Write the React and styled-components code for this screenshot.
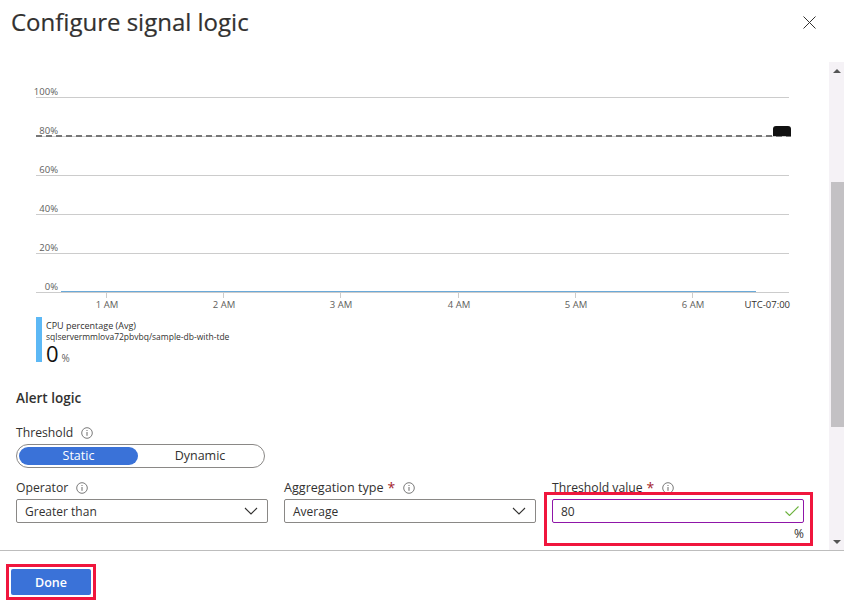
import styled, { createGlobalStyle } from 'styled-components';

const GlobalStyle = createGlobalStyle`
  html, body { margin: 0; padding: 0; background: #fff; }
  body { font-family: "Open Sans", "Noto Sans", sans-serif; color: #323130; }
`;

const ticks = [
  { label: '1 AM', x: 106 },
  { label: '2 AM', x: 223 },
  { label: '3 AM', x: 340 },
  { label: '4 AM', x: 458 },
  { label: '5 AM', x: 575 },
  { label: '6 AM', x: 692 },
];
const grid = [
  { label: '100%', y: 97 },
  { label: '60%', y: 175 },
  { label: '40%', y: 214 },
  { label: '20%', y: 253 },
];

function InfoIcon() {
  return (
    <Info viewBox="0 0 12 12" width="12" height="12">
      <circle cx="6" cy="6" r="5.3" fill="none" stroke="#6b6b6b" strokeWidth="0.9" />
      <rect x="5.5" y="5" width="1" height="3.8" fill="#6b6b6b" />
      <rect x="5.5" y="3" width="1" height="1" fill="#6b6b6b" />
    </Info>
  );
}

function Chevron() {
  return (
    <svg width="14" height="8" viewBox="0 0 14 8">
      <path d="M1 1l6 6 6-6" fill="none" stroke="#323130" strokeWidth="1.1" />
    </svg>
  );
}

function Chart() {
  return (
    <ChartSvg width="829" height="254" viewBox="0 62 829 254">
      {grid.map((g) => (
        <g key={g.y}>
          <line x1="36" x2="789" y1={g.y + 0.5} y2={g.y + 0.5} stroke="#ccc" />
          <AxisText x="58" y={g.y - 2} textAnchor="end">{g.label}</AxisText>
        </g>
      ))}
      <line x1="36" x2="789" y1="136.5" y2="136.5" stroke="#ccc" />
      <line x1="36" x2="791" y1="136" y2="136" stroke="#777" strokeWidth="2" strokeDasharray="6 4" />
      <AxisText x="58" y="134" textAnchor="end">80%</AxisText>
      <path d="M773 136v-7q0-3 3-3h12q3 0 3 3v7z" fill="#111" />

      <line x1="36" x2="789" y1="292.5" y2="292.5" stroke="#ccc" />
      <line x1="61" x2="756" y1="291.5" y2="291.5" stroke="#6aa9d8" />
      <AxisText x="58" y="290" textAnchor="end">0%</AxisText>
      {ticks.map((t) => (
        <g key={t.label}>
          <line x1={t.x + 0.5} x2={t.x + 0.5} y1="293" y2="298" stroke="#ccc" />
          <AxisText x={t.x + 1} y="308" textAnchor="middle">{t.label}</AxisText>
        </g>
      ))}
      <ZoneText x="790" y="308" textAnchor="end">UTC-07:00</ZoneText>
    </ChartSvg>
  );
}

export default function App() {
  return (
    <Page>
      <GlobalStyle />
      <Header>
        <Title>Configure signal logic</Title>
        <CloseButton aria-label="Close">
          <svg width="13" height="13" viewBox="0 0 13 13">
            <path d="M.5.5l12 12M12.5.5l-12 12" stroke="#323130" strokeWidth="1" fill="none" />
          </svg>
        </CloseButton>
      </Header>

      <Body>
        <Content>
          <Chart />
          <Legend>
            <LegendBar />
            <LegendText>
              <LegendLine>CPU percentage (Avg)</LegendLine>
              <LegendLine $small>sqlservermmlova72pbvbq/sample-db-with-tde</LegendLine>
              <LegendValue>0<small>%</small></LegendValue>
            </LegendText>
          </Legend>

          <SectionTitle>Alert logic</SectionTitle>
          <ThresholdLabel>Threshold <InfoIcon /></ThresholdLabel>
          <Toggle>
            <ToggleOption $active>Static</ToggleOption>
            <ToggleOption>Dynamic</ToggleOption>
          </Toggle>

          <FieldRow>
            <Field>
              <Label>Operator <InfoIcon /></Label>
              <Control>Greater than <Chevron /></Control>
            </Field>
            <Field>
              <Label $wide>Aggregation type <Star>*</Star> <InfoIcon /></Label>
              <Control>Average <Chevron /></Control>
            </Field>
            <Field>
              <Label>Threshold value <Star>*</Star> <InfoIcon /></Label>
              <Control $focus>
                80
                <svg width="14" height="10" viewBox="0 0 14 10">
                  <path d="M.5 5.5l4 4 9-9" fill="none" stroke="#6bb23c" strokeWidth="1.1" />
                </svg>
              </Control>
              <Unit>%</Unit>
              <Highlight />
            </Field>
          </FieldRow>
        </Content>

        <Scrollbar>
          <Arrow />
          <Track><Thumb /></Track>
          <Arrow $down />
        </Scrollbar>
      </Body>

      <Footer>
        <DoneWrap>
          <DoneButton>Done</DoneButton>
        </DoneWrap>
      </Footer>
    </Page>
  );
}

const Page = styled.div`
  width: 844px;
  height: 604px;
  display: flex;
  flex-direction: column;
  overflow: hidden;
  background: #fff;
`;

const Header = styled.div`
  height: 62px;
  flex: none;
  display: flex;
  justify-content: space-between;
  align-items: flex-start;
  padding: 0 28px 0 11px;
  box-sizing: border-box;
`;

const Title = styled.h1`
  margin: 0;
  font-size: 24px;
  font-weight: 400;
  line-height: 44px;
  -webkit-text-stroke: 0.2px #323130;
`;

const CloseButton = styled.button`
  border: 0;
  padding: 0;
  margin-top: 16px;
  width: 13px;
  height: 13px;
  background: none;
  display: flex;
`;

const Body = styled.div`
  height: 488px;
  flex: none;
  display: flex;
`;

const Content = styled.div`
  flex: 1;
  min-width: 0;
  overflow: hidden;
`;

const ChartSvg = styled.svg`
  display: block;
`;

const AxisText = styled.text`
  font-size: 9.5px;
  fill: #605e5c;
`;

const ZoneText = styled.text`
  font-size: 9.5px;
  fill: #323130;
`;

const Legend = styled.div`
  display: flex;
  gap: 4px;
  margin: 1px 0 0 36px;
  height: 45px;
`;

const LegendBar = styled.div`
  width: 6px;
  height: 45px;
  background: #5cb8f5;
`;

const LegendText = styled.div`
  padding-top: 3px;
`;

const LegendLine = styled.div`
  font-size: ${(p) => (p.$small ? '8.5px' : '9px')};
  line-height: 11px;
  color: #323130;
  white-space: nowrap;
`;

const LegendValue = styled.div`
  margin-top: 1px;
  font-size: 22px;
  line-height: 20px;
  color: #111;
  small {
    font-size: 10px;
    color: #605e5c;
    margin-left: 3px;
  }
`;

const SectionTitle = styled.div`
  margin: 27px 0 0 16px;
  height: 18px;
  font-size: 13.5px;
  line-height: 18px;
  font-weight: 600;
`;

const Label = styled.div`
  display: flex;
  align-items: center;
  gap: 5px;
  height: 18px;
  padding-top: 1px;
  box-sizing: border-box;
  font-size: ${(p) => (p.$wide ? '12.6px' : '12.2px')};
  line-height: 18px;
  color: #323130;
  white-space: nowrap;
`;

const ThresholdLabel = styled(Label)`
  margin: 16px 0 3px 16px;
`;

const Info = styled.svg`
  margin-left: 3px;
`;

const Star = styled.span`
  color: #a4262c;
  font-size: 14px;
  margin-left: -1px;
`;

const Toggle = styled.div`
  width: 249px;
  height: 24px;
  margin-left: 16px;
  box-sizing: border-box;
  border: 1px solid #8a8886;
  border-radius: 12px;
  padding: 2px;
  display: grid;
  grid-template-columns: 119px 1fr;
`;

const ToggleOption = styled.div`
  border-radius: 9px;
  text-align: center;
  font-size: 12.5px;
  line-height: 18px;
  color: ${(p) => (p.$active ? '#fff' : '#323130')};
  background: ${(p) => (p.$active ? '#3a72d8' : 'transparent')};
`;

const FieldRow = styled.div`
  display: grid;
  grid-template-columns: repeat(3, 252px);
  column-gap: 16px;
  padding: 10px 0 0 16px;
`;

const Field = styled.div`
  position: relative;
  display: flex;
  flex-direction: column;
  gap: 3px;
`;

const Control = styled.div`
  height: 24px;
  box-sizing: border-box;
  border: 1px solid ${(p) => (p.$focus ? '#8f16a8' : '#8a8886')};
  border-radius: 2px;
  padding: 0 ${(p) => (p.$focus ? '4px' : '9px')} 0 8px;
  display: flex;
  align-items: center;
  justify-content: space-between;
  font-size: 12px;
  color: #323130;
`;

const Unit = styled.div`
  margin-top: 1px;
  text-align: right;
  font-size: 12px;
  line-height: 14px;
`;

const Highlight = styled.div`
  position: absolute;
  left: -8px;
  right: -9px;
  top: 14px;
  height: 54px;
  box-sizing: border-box;
  border: 3px solid #f0163d;
  pointer-events: none;
`;

const Scrollbar = styled.div`
  width: 15px;
  flex: none;
  background: #f5f2f6;
  display: flex;
  flex-direction: column;
`;

const Track = styled.div`
  flex: 1;
  padding-top: 103px;
  display: flex;
  justify-content: flex-end;
`;

const Thumb = styled.div`
  width: 13px;
  height: 245px;
  background: #c3c1c4;
`;

const Arrow = styled.div`
  height: 17px;
  display: flex;
  align-items: center;
  justify-content: center;
  &::before {
    content: '';
    border-left: 4px solid transparent;
    border-right: 4px solid transparent;
    ${(p) => (p.$down ? 'border-top: 4px solid #555;' : 'border-bottom: 4px solid #555;')}
  }
`;

const Footer = styled.div`
  flex: 1;
  border-top: 1px solid #bdbdbd;
  padding: 13px 0 0 6px;
`;

const DoneWrap = styled.div`
  width: 90px;
  height: 36px;
  box-sizing: border-box;
  border: 3px solid #f0163d;
  padding: 2px;
`;

const DoneButton = styled.button`
  width: 100%;
  height: 100%;
  border: 0;
  border-radius: 2px;
  background: #3a72d8;
  color: #fff;
  font-family: inherit;
  font-size: 12.5px;
  font-weight: 600;
  padding: 0;
`;
